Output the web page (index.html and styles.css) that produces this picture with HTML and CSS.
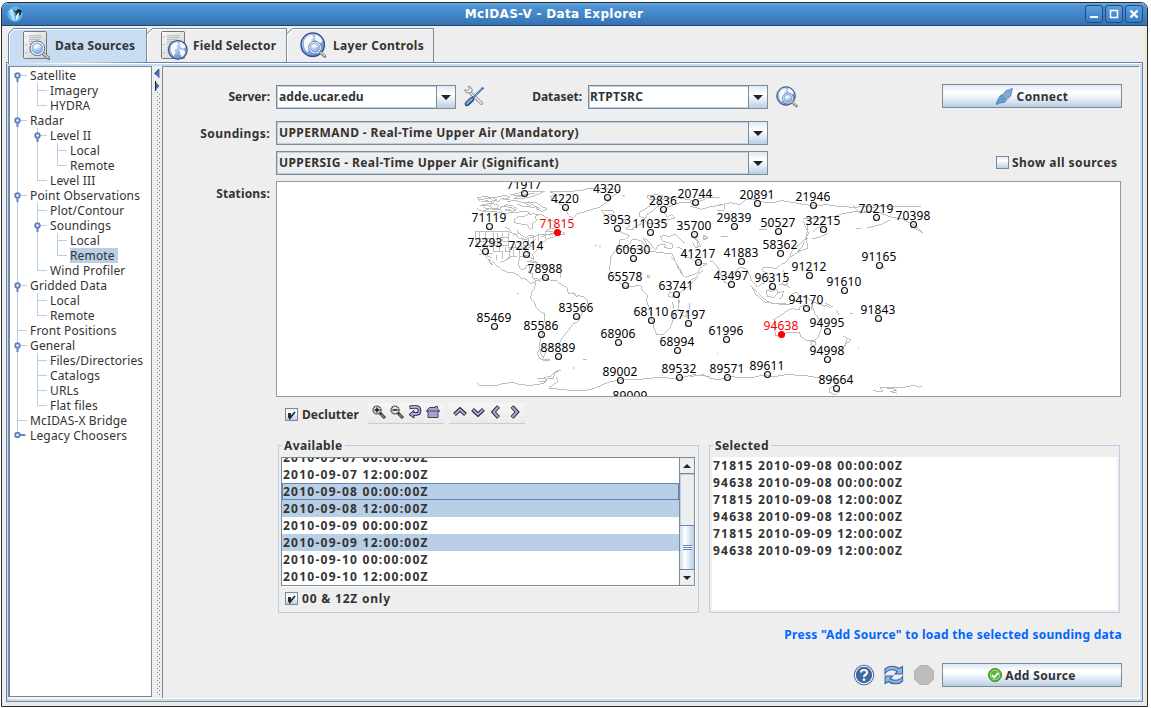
FILE: index.html
```html
<!DOCTYPE html>
<html lang="en">
<head>
<meta charset="utf-8">
<title>McIDAS-V - Data Explorer</title>
<link rel="stylesheet" href="styles.css">
</head>
<body>
<svg class="defs" aria-hidden="true">
  <defs>
    <radialGradient id="globe" cx=".4" cy=".35" r=".7"><stop offset="0" stop-color="#c9dcf3"/><stop offset="1" stop-color="#5f8ccb"/></radialGradient>
    <radialGradient id="lens" cx=".4" cy=".35" r=".7"><stop offset="0" stop-color="#e3effb"/><stop offset="1" stop-color="#6fa3dc"/></radialGradient>
    <linearGradient id="paper" x1="0" y1="0" x2="1" y2="1"><stop offset="0" stop-color="#fafafa"/><stop offset="1" stop-color="#cfcfcf"/></linearGradient>
    <symbol id="page" viewBox="0 0 72 84">
      <rect x="1.5" y="1.5" width="69" height="81" rx="3" fill="url(#paper)" stroke="#777" stroke-width="3"/>
      <path d="M18 14H56M18 20H56M18 26H50M18 32H56M18 38H44M18 50H56M18 56H50M18 62H56" stroke="#aaa" stroke-width="2.5"/>
      <path d="M9 16v3M9 40v3M9 64v3" stroke="#777" stroke-width="3"/>
    </symbol>
    <symbol id="magnifier" viewBox="0 0 66 62">
      <path d="M44 42L60 56" stroke="#777" stroke-width="10" stroke-linecap="round"/>
      <path d="M45 42L59 54" stroke="#ddd" stroke-width="4" stroke-linecap="round"/>
      <circle cx="26" cy="26" r="22" fill="#f4f6fa" stroke="#54699b" stroke-width="3"/>
      <circle cx="26" cy="26" r="16" fill="url(#lens)" stroke="#6c8fc4" stroke-width="2"/>
      <path d="M13 27a13 13 0 0 1 25-5z" fill="#fff" opacity=".6"/>
    </symbol>
    <symbol id="earth" viewBox="0 0 80 80">
      <circle cx="40" cy="40" r="37" fill="url(#globe)" stroke="#37478c" stroke-width="4"/>
      <path d="M13 28Q22 10 38 9L43 18 34 24 38 33 27 40 31 50 24 64Q9 52 13 28zM48 8Q65 13 71 28L63 36 52 31 47 20zM47 38L66 41 69 54 57 69 49 56z" fill="#fff" opacity=".92"/>
    </symbol>
    <symbol id="node-open" viewBox="0 0 7 10"><path d="M3.5 6v4" stroke="#6382bf" stroke-width="2"/><circle cx="3.5" cy="3.5" r="2.2" fill="#fff" stroke="#6382bf" stroke-width="2"/></symbol>
    <symbol id="check" viewBox="0 0 13 13"><path d="M4 5v5M5 5v5l5-6" fill="none" stroke="#222" stroke-width="1.8"/></symbol>
  </defs>
</svg>

<div class="window">
  <header class="titlebar">
    <svg class="app-icon" viewBox="0 0 48 48"><circle cx="24" cy="24" r="23" fill="#62b4e2"/><path d="M6 16l10-8 4 14 5 22-8-2z" fill="#b9e2f5"/><path d="M17 9l9 13 3-10 7-4 9 7-5 12-9 4-6-3 3-10z" fill="#102839"/><path d="M28 27l9-10-3 19-8 9z" fill="#dff5fd"/></svg>
    <h1>McIDAS-V - Data Explorer</h1>
    <div class="win-buttons">
      <span><svg viewBox="0 0 16 16"><path d="M4 11h8" stroke="#fff" stroke-width="2"/></svg></span>
      <span><svg viewBox="0 0 16 16"><path d="M4 4.5h8M4.5 4v8M11.500 4v8M4 11.500h8" stroke="#fff" stroke-width="1.5"/></svg></span>
      <span><svg viewBox="0 0 16 16"><path d="M4.500 4.500l7 7M11.500 4.500l-7 7" stroke="#fff" stroke-width="2.300"/></svg></span>
    </div>
  </header>

  <div class="frame">
    <nav class="tabs">
      <div class="tab tab-active">
        <svg class="tab-shape" width="139" height="36"><path d="M.5 36V5.500L5.500 .5H138.500V34" fill="#c8ddf2" stroke="#6382bf"/><path d="M1.500 36V6L6 1.500H138" fill="none" stroke="#fff"/></svg>
        <svg class="tab-icon" viewBox="0 0 81 87"><use href="#page" width="72" height="84"/><use href="#magnifier" x="17" y="26" width="66" height="62"/></svg>
        <span>Data Sources</span>
      </div>
      <div class="tab tab-field">
        <svg class="tab-shape" width="141" height="34"><path d="M.5 34V6L6.500 .5H140.500V34" fill="#eee" stroke="#7a8a99"/><path d="M1.500 34V7L7 1.500H139" fill="none" stroke="#fff"/></svg>
        <svg class="tab-icon" viewBox="0 0 81 87"><use href="#page" width="72" height="84"/><use href="#earth" x="20" y="26" width="61" height="61"/></svg>
        <span>Field Selector</span>
      </div>
      <div class="tab tab-layer">
        <svg class="tab-shape" width="148" height="34"><path d="M.5 34V6L6.500 .5H147.500V34" fill="#eee" stroke="#7a8a99"/><path d="M1.500 34V7L7 1.500H146" fill="none" stroke="#fff"/></svg>
        <svg class="tab-icon" viewBox="0 0 87 87"><use href="#earth" y="0" width="82" height="82"/><use href="#magnifier" x="24" y="24" width="62" height="62"/></svg>
        <span>Layer Controls</span>
      </div>
    </nav>

    <div class="pane">
      <div class="pane-body">
        <aside class="tree">
          <svg class="tree-lines" width="141" height="390" shape-rendering="crispEdges">
            <path d="M7.500 8V368M8 8.500h9M8 53.500h9M8 128.500h9M8 218.500h9M8 263.500h9M8 278.500h9M8 353.500h9M8 368.500h9
              M27.500 16V38.500M27 23.500h10M27 38.500h10M27.500 61V113.500M27 68.500h10M27 113.500h10M47.500 76V98.500M47 83.500h10M47 98.500h10
              M27.500 136V203.500M27 143.500h10M27 158.500h10M27 203.500h10M47.500 166V188.500M47 173.500h10M47 188.500h10
              M27.500 226V248.500M27 233.500h10M27 248.500h10M27.500 286V338.500M27 293.500h10M27 308.500h10M27 323.500h10M27 338.500h10" fill="none" stroke="#b8cfe5"/>
            <g shape-rendering="auto">
              <use href="#node-open" x="4" y="5" width="7" height="10"/><use href="#node-open" x="4" y="50" width="7" height="10"/>
              <use href="#node-open" x="24" y="65" width="7" height="10"/><use href="#node-open" x="4" y="125" width="7" height="10"/>
              <use href="#node-open" x="24" y="155" width="7" height="10"/><use href="#node-open" x="4" y="215" width="7" height="10"/>
              <use href="#node-open" x="4" y="275" width="7" height="10"/>
              <path d="M10 368h5" stroke="#6382bf" stroke-width="2"/><circle cx="7.500" cy="368" r="2.200" fill="#fff" stroke="#6382bf" stroke-width="2"/>
            </g>
          </svg>
          <ul>
            <li>Satellite</li><li class="l1">Imagery</li><li class="l1">HYDRA</li>
            <li>Radar</li><li class="l1">Level II</li><li class="l2">Local</li><li class="l2">Remote</li><li class="l1">Level III</li>
            <li>Point Observations</li><li class="l1">Plot/Contour</li><li class="l1">Soundings</li><li class="l2">Local</li><li class="l2"><mark>Remote</mark></li><li class="l1">Wind Profiler</li>
            <li>Gridded Data</li><li class="l1">Local</li><li class="l1">Remote</li>
            <li>Front Positions</li>
            <li>General</li><li class="l1">Files/Directories</li><li class="l1">Catalogs</li><li class="l1">URLs</li><li class="l1">Flat files</li>
            <li>McIDAS-X Bridge</li><li>Legacy Choosers</li>
          </ul>
        </aside>
        <div class="splitter"><svg width="10" height="26"><path d="M7.500 3v9.500l-5-4.700zM3 15v10l4.500-5z" fill="#4a6db5"/><path d="M7 3l-4.500 5M3.500 15v10" stroke="#222"/></svg></div>

        <main class="main">
          <div class="row row-server">
            <label class="label tight">Server:</label>
            <div class="combo editable w180"><span class="host">adde.ucar.edu</span><i></i></div>
            <svg class="tools" viewBox="0 0 66 70">
              <path d="M18 20L56 56" stroke="#777" stroke-width="9" stroke-linecap="round"/><path d="M18 20L56 56" stroke="#f7f7f7" stroke-width="4.500" stroke-linecap="round"/>
              <path d="M5 14Q5 26 19 24L28 19Q27 4 15 4L20 11 13 17z" fill="#eee" stroke="#777" stroke-width="2.500"/>
              <path d="M60 9L29 40" stroke="#34608f" stroke-width="6"/><path d="M60 9L29 40" stroke="#c3dcf4" stroke-width="2"/>
              <path d="M57 8l5 5" stroke="#4a82bd" stroke-width="7"/>
              <path d="M26 44L12 57" stroke="#1f4379" stroke-width="15" stroke-linecap="round"/><path d="M26 43L12 56" stroke="#80a9d6" stroke-width="8" stroke-linecap="round"/>
            </svg>
            <label class="label tight dataset">Dataset:</label>
            <div class="combo editable w180"><span class="set">RTPTSRC</span><i></i></div>
            <svg class="browse" viewBox="0 0 66 66"><use href="#earth" width="60" height="60"/><use href="#magnifier" x="16" y="16" width="50" height="50"/></svg>
            <button class="button connect"><svg width="17" height="17" viewBox="0 0 50 50"><path d="M1 49L3 39 13 22 23 18 33 31 26 42 11 44z" fill="#6a99d3" stroke="#3f6fb0" stroke-width="2"/><path d="M22 17L30 7 40 5 48 1 46 12 43 24 34 31z" fill="#7fa9dc" stroke="#3f6fb0" stroke-width="2"/><path d="M20 16L35 34" stroke="#9ac779" stroke-width="3.500"/></svg>Connect</button>
          </div>
          <div class="row row-s1">
            <label class="label">Soundings:</label>
            <div class="combo w492"><span>UPPERMAND - Real-Time Upper Air (Mandatory)</span><i></i></div>
          </div>
          <div class="row row-s2">
            <div class="combo w492"><span>UPPERSIG - Real-Time Upper Air (Significant)</span><i></i></div>
            <label class="checkbox show-all"><b></b>Show all sources</label>
          </div>
          <div class="row row-map">
            <label class="label stations-label">Stations:</label>
            <svg class="map" viewBox="277 182 843 214">
              <g class="coast" transform="translate(460 178) scale(.33333)">
                <path d="M52 60L70 56 95 58 110 66 84 72 62 70zM66 80L95 76 118 82 108 92 78 92zM98 60L136 52 150 58 128 66M70 98L92 92 118 96 124 84 150 88 168 96 158 100 134 94M150 50L184 44 200 40 254 40 232 50 212 58 180 62 158 60M140 70L168 68 192 74 212 84 190 86 172 78M204 74L228 74 246 86 262 92 246 100 228 92M52 92L60 98 80 102 100 100 130 106 160 104 178 102 196 100 210 104 196 114 176 116 162 124 164 134 184 138 202 140 210 154 218 152 216 138 230 128 224 116 236 108 250 112 262 122 280 130 292 140 284 150 264 154 254 162 276 160 284 166 302 160 316 168 294 172 280 178 262 182 250 192 238 198 236 212 222 224 218 230 222 246 214 240 206 232 180 236 176 250 176 262 184 276 196 272 200 262 210 264 208 276 204 284 216 286 218 298 228 308 238 306 244 312"/>
                <path d="M56 64L90 62 104 70M60 84L84 82 96 88M74 66L100 74 86 88M112 72L124 62 150 66M122 90L140 80 158 84 172 92M160 54L196 50 226 46M166 58L190 54 206 46M182 74L206 72 222 84 240 92M210 90L230 86 238 98M96 96L110 90 126 98M136 98L150 94M206 112L220 106 234 112M136 148L146 152 154 162M160 172L176 166 192 176 186 186M170 156L180 168M196 180L206 172 222 172M244 176L262 170 280 166 298 168M268 172L290 164M140 244L150 236 170 236M56 228L66 230M80 232L96 240"/>
                <path d="M46 160L46 180 54 204 66 222 76 232 92 254 98 262 88 252 84 244 94 248 108 262 120 270 126 276 142 282 160 284 174 290 184 300 198 304 210 316 222 314 228 310"/>
                <path d="M46 162H146L166 168 178 180 194 186 206 180 222 176 236 170 246 168 256 172M60 163V182H100V164M78 163V204M100 182V222M64 204H120M112 164V206M120 222V204H146V190M128 164V190H160M146 164V202M160 188L170 210H144M150 210V240M170 210L200 212 220 202M162 212V236M178 214V236M192 212L206 226M100 222H128V242M82 204V226H100M174 190L188 210 214 196 228 184M206 184V204M222 176V196M60 192H100M100 192H122M120 180H146M136 206V222H152M190 190V202H214M236 172V188M256 164V182M110 232V246M120 254L142 244 150 240"/>
                <path d="M210 246L234 254 220 250M238 260L260 262 252 268 240 264M212 236L222 244M225 250L236 262M200 250L228 254M302 286V300"/>
                <path d="M218 300L238 304 254 298 270 306 290 308 302 318 320 328 326 348 342 344 350 352 370 356 382 366 382 378 370 392 364 412 354 430 338 438 328 454 316 468 304 484 298 494 290 498 286 504 270 506 258 516 256 526 246 544 270 546M228 310L224 328 214 346 212 360 222 372 230 390 244 402 254 408 254 426 248 444 248 462 244 478 240 492 238 512 232 528 238 540 254 548 270 548M244 500L242 526 250 540M340 346L354 358"/>
                <path d="M270 42L300 40 330 40 362 38 380 32 440 32 480 38 474 46 460 52 450 66 430 80 418 88 396 94 372 102 350 108 338 122 326 112 318 98 306 84 290 72 276 66 270 56 290 50zM424 98L444 96 462 100 460 108 440 112 426 104M482 120L494 126 502 136 510 144 496 152 508 156 522 154M482 136L496 134M486 52H494"/>
                <path d="M478 160L494 168 508 172 496 184 480 186 476 202 494 206 506 200 516 186 530 184 546 190 558 206 564 210 560 196 548 182 552 180 570 194 578 208 588 214 594 202 606 198 618 200 612 208 630 212 640 208 636 198 622 194 608 188 600 176 612 172 630 176 644 168 650 174 664 188 676 196M510 156L524 148 540 140 546 128 552 122 560 136 590 136 604 128 620 126 646 120 634 110 622 118 612 104 622 88 646 78 668 72 692 74 706 84M540 116L556 122 562 108 580 98 596 84 600 72 612 62 650 58 690 66 704 74M560 54L590 50 610 54 596 64 570 66zM540 116L538 104 554 94 570 84 582 66"/>
                <path d="M478 206L464 220 452 238 450 262 448 276 460 292 470 306 484 320 502 328 526 324 542 322 548 340 562 350 560 370 568 390 574 416 580 444 590 470 610 470 630 450 638 430 642 412 654 394 658 370 654 350 666 340 690 322 710 300 714 296M478 206L506 210 550 214 560 220 588 222 618 226 636 228 646 250 658 278 674 298 694 292 714 284 718 272 740 258 722 254 706 252 694 242 680 238 668 214 650 206M634 238L650 256 672 296M656 364V390L666 412 678 416 688 394 690 376M628 342L640 344 638 358 626 356zM562 292h8v6h-8zM636 372L642 392 638 378"/>
                <path d="M700 178L714 188 722 206 706 208 698 192M732 170l8 8-8 8zM50 616L58 622 84 622 106 624 130 616 160 614 182 620 206 622 230 620 256 614 262 602 280 602 284 586 304 576 286 580 272 594 244 602M232 602H254L258 610 236 610M290 596L292 612 266 630 300 634 340 638 370 638 400 632 428 620 450 612 480 606 540 604 600 598 650 602 700 590 750 596M170 346h8M404 203h6M416 206h6M342 568v6M368 544h12"/>
              </g>
              <g class="coast" transform="translate(690 178) scale(.33333)">
                <path d="M0 84L34 94 60 86 90 82 120 74 150 80 166 66 196 64 224 74 250 74 276 68 324 76 370 84 410 80 450 86 500 88 518 84 550 88 570 84 694 86M82 98L104 96 102 78 82 82M0 70L36 60 90 60M20 72L44 64M490 82L510 106 530 100 570 104 604 118 636 122 654 132 676 144 698 164 680 154 662 146M340 122L372 122 430 116 464 106 500 100 530 104M340 128L346 146 356 166 340 190 320 206 304 220 300 236 286 254 272 260 260 272 240 268 218 270 216 278 232 286 236 300 222 316 210 320"/>
                <path d="M354 136L350 176 352 212 334 218 322 220 338 204 344 188 354 180M396 138L378 154 368 162M320 222L332 218 304 236M232 156L208 156M94 176H114M40 178l6-4 8 6-8 4zM498 152h14M530 150L572 140 600 126M414 166L388 178 366 182M10 178L24 190 22 206M60 252H70L82 266 92 288 104 314 118 316 122 300 136 280 148 268 168 272 180 292 184 306 194 316 202 328 210 320M-2 310L20 296 40 276M180 322L202 344 220 362 240 374 280 380 300 380M186 326L198 350 224 372 250 376 288 378M228 336L244 340 260 334 264 344 252 358 232 356zM262 346L280 340 276 358 268 362M280 276L286 296 276 318 292 320 288 304M236 302L246 314 240 324M298 370L320 366M302 350L316 342 330 354 350 358 370 372 390 380 410 384 424 390M300 328L280 320 268 320"/>
                <path d="M252 424L270 414 286 402 306 392 328 396 330 386 344 380 356 392 364 396 366 378 374 406 388 424 394 452 386 474 372 488 348 486 332 476 328 462 292 464 274 470 256 474 254 450zM360 490H376V502H366zM460 474L484 486 470 496 458 512 442 526 464 506 470 484M440 396L446 410M480 408L490 408M504 508h3M80 528h3M578 262l6 10M406 376L428 386"/>
                <path d="M0 596L40 590 58 600 84 606 118 596 180 600 226 590 250 596 290 590 340 592 390 600 440 606 450 614 420 630 418 642 434 650 450 640M550 638L580 642 570 628 610 632 620 638 600 640 620 646M590 630H630L670 622 690 628 696 624"/>
              </g>
              <g id="stations" class="stations"></g>
            </svg>
          </div>
          <div class="row row-declutter">
            <label class="checkbox"><b><svg width="11" height="11" viewBox="1 1 11 11"><use href="#check" width="13" height="13"/></svg></b>Declutter</label>
            <div class="toolbar">
              <svg viewBox="0 0 14 14"><circle cx="5" cy="5" r="4" fill="#dde" stroke="#222" stroke-width="1.200" stroke-dasharray="1.500 .6"/><path d="M2.500 5h5M5 2.500v5" stroke="#111" stroke-width="1.400"/><path d="M8 8l5 5" stroke="#222" stroke-width="3"/><path d="M9 9l3.500 3.500" stroke="#c37b45" stroke-width="1.500"/></svg>
              <svg viewBox="0 0 14 14"><circle cx="5" cy="5" r="4" fill="#dde" stroke="#222" stroke-width="1.200" stroke-dasharray="1.500 .6"/><path d="M2.500 5h5" stroke="#111" stroke-width="1.400"/><path d="M8 8l5 5" stroke="#222" stroke-width="3"/><path d="M9 9l3.500 3.500" stroke="#c37b45" stroke-width="1.500"/></svg>
              <svg viewBox="0 0 14 14"><path d="M1.500 2.500L4 2H8Q11.500 2 11.500 5.500T8 9H5.500" fill="none" stroke="#223" stroke-width="3.600"/><path d="M6 5.500v7.500L1 9.500z" fill="#aaaadd" stroke="#223"/><path d="M2 2.500L4 2H8Q11.500 2 11.500 5.500T8 9H4" fill="none" stroke="#aaaadd" stroke-width="1.800"/></svg>
              <svg viewBox="0 0 14 14"><path d="M.5 5.500L3.500 2.500H9V1.500H11.500V3.500L13.500 5.500V6.500H12V12.500H2V6.500H.5z" fill="#a3a3d0" stroke="#446"/><path d="M1 6h12" stroke="#446"/></svg>
            </div>
            <div class="toolbar arrows">
              <svg viewBox="0 0 14 14"><path class="edge" d="M1.500 9.500L7 4.500l5.500 5"/><path class="fill" d="M2 9.200L7 4.500l5 4.700"/></svg>
              <svg viewBox="0 0 14 14"><path class="edge" d="M1.500 4.500L7 9.500l5.500-5"/><path class="fill" d="M2 4.800L7 9.500l5-4.700"/></svg>
              <svg viewBox="0 0 14 14"><path class="edge" d="M9.500 1.500L4.500 7l5 5.500"/><path class="fill" d="M9.200 2L4.500 7l4.700 5"/></svg>
              <svg viewBox="0 0 14 14"><path class="edge" d="M5 1.500L10 7l-5 5.500"/><path class="fill" d="M5.300 2L10 7l-4.700 5"/></svg>
            </div>
          </div>
          <div class="groups">
            <section class="group available">
              <h2>Available</h2>
              <div class="scroll">
                <ul class="times">
                  <li>2010-09-07 00:00:00Z</li><li>2010-09-07 12:00:00Z</li><li class="sel focus">2010-09-08 00:00:00Z</li><li class="sel">2010-09-08 12:00:00Z</li>
                  <li>2010-09-09 00:00:00Z</li><li class="sel">2010-09-09 12:00:00Z</li><li>2010-09-10 00:00:00Z</li><li>2010-09-10 12:00:00Z</li>
                </ul>
                <div class="bar"><div class="step up"></div><div class="track"></div><div class="thumb"></div><div class="step down"></div></div>
              </div>
              <label class="checkbox only"><b><svg width="11" height="11" viewBox="1 1 11 11"><use href="#check" width="13" height="13"/></svg></b>00 &amp; 12Z only</label>
            </section>
            <section class="group selected">
              <h2>Selected</h2>
              <ul class="times chosen">
                <li>71815 2010-09-08 00:00:00Z</li><li>94638 2010-09-08 00:00:00Z</li><li>71815 2010-09-08 12:00:00Z</li>
                <li>94638 2010-09-08 12:00:00Z</li><li>71815 2010-09-09 12:00:00Z</li><li>94638 2010-09-09 12:00:00Z</li>
              </ul>
            </section>
          </div>
          <p class="status">Press "Add Source" to load the selected sounding data</p>
          <div class="actions">
            <svg width="22" height="22" viewBox="0 0 22 22"><circle cx="11" cy="11" r="9.700" fill="#fff" stroke="#4d76ad" stroke-width="1.100"/><circle cx="11" cy="11" r="8.200" fill="#41699f"/><path d="M8 8.500Q8 6 11 6t3 2.500q0 1.500-1.500 2.300T11 13" fill="none" stroke="#fff" stroke-width="2.200"/><circle cx="11" cy="15.700" r="1.400" fill="#fff"/></svg>
            <svg width="20" height="20" viewBox="0 0 20 20"><g id="ra"><path d="M1 8.500V4Q4 1 8 1.200q5 .3 7 2.300L18.500 1.500V9H11l2.500-2.500Q11 4.500 8 4.700 3.500 5 1 8.500z" fill="#8fb5df" stroke="#3467a4" stroke-width="1.100"/></g><use href="#ra" transform="rotate(180 9.800 10)"/></svg>
            <svg width="20" height="20" viewBox="0 0 20 20"><path d="M6 .5h8L19.500 6v8L14 19.500H6L.5 14V6z" fill="#bdbdbd" stroke="#b2b2b2"/></svg>
            <button class="button add"><svg width="14" height="14" viewBox="0 0 14 14"><circle cx="7" cy="7" r="6.500" fill="#55b52f" stroke="#3b8d22"/><circle cx="7" cy="7" r="4.700" fill="none" stroke="#bfe8ab" stroke-width=".8"/><path d="M4 7l2.300 2.300L10.200 5" fill="none" stroke="#fff" stroke-width="1.900"/></svg>Add Source</button>
          </div>
        </main>
      </div>
    </div>
  </div>
</div>
<script src="stations.js"></script>
</body>
</html>
```
FILE: styles.css
```css
* { box-sizing: border-box; }
body { margin: 0; background: #fff; color: #333; font: bold 12px/15px "Noto Sans", sans-serif; overflow: hidden; }
ul, h1, h2, p { margin: 0; padding: 0; list-style: none; font-size: inherit; }
svg { display: block; flex: none; }
.defs { position: absolute; width: 0; height: 0; }

.window { display: flex; flex-direction: column; width: 1147px; height: 705px; margin: 2px 0 0 1px; border: 1px solid #2b2b2b; border-radius: 7px 7px 0 0; overflow: hidden; background: #eee; }
.titlebar { display: flex; align-items: center; height: 23px; flex: none; border-bottom: 1px solid #1c4878; background: linear-gradient(#6caae0 0, #4c92d3 15%, #4086c8 55%, #3871ad); color: #fff; padding: 0 4px 0 5px; }
.app-icon { width: 16px; height: 16px; }
.titlebar h1 { flex: 1; text-align: center; font: bold 12px/16px "DejaVu Sans", sans-serif; letter-spacing: .3px; }
.win-buttons { display: flex; gap: 2px; }
.win-buttons span { width: 18px; height: 18px; border: 1px solid #1f4d80; border-radius: 3px; background: linear-gradient(#5b9edd, #3b7ec0); }

.frame { flex: 1; display: flex; flex-direction: column; padding: 2px 4px 4px; background: linear-gradient(#edeae0, #edeae0) right / 4px 100% no-repeat, linear-gradient(#edeae0, #edeae0) bottom / 100% 4px no-repeat; }
.tabs { display: flex; height: 34px; padding-left: 2px; position: relative; z-index: 1; }
.tab { position: relative; display: flex; align-items: center; height: 34px; }
.tab-shape { position: absolute; left: 0; top: 0; }
.tab-icon { position: relative; width: 27px; height: 29px; }
.tab span { position: relative; letter-spacing: .2px; }
.tab-active { width: 139px; padding-left: 15px; gap: 5px; }
.tab-field { width: 140px; margin-left: -1px; padding-left: 15px; gap: 5px; }
.tab-layer { width: 148px; padding-left: 14px; gap: 6px; }
.tab-layer span { letter-spacing: .3px; }

.pane { flex: 1; display: flex; border: 1px solid #6382bf; border-bottom-color: #7a8a99; padding: 3px 3px 3px 1px; background: linear-gradient(#fff 1px, #c8ddf2 1px); }
.pane-body { flex: 1; display: flex; background: #eee; box-shadow: 1px 1px 0 #fff; }

.tree { position: relative; width: 144px; border: 1px solid #7a8a99; border-left-width: 2px; background: #fff; margin-bottom: 1px; font-weight: normal; }
.tree-lines { position: absolute; left: 0; top: 0; }
.tree ul { position: relative; padding-top: 1px; letter-spacing: .15px; }
.tree li { height: 15px; padding-left: 20px; white-space: nowrap; }
.tree .l1 { padding-left: 40px; }
.tree .l2 { padding-left: 60px; }
.tree mark { display: inline-block; height: 15px; padding-right: 3px; background: #b8cfe5; color: inherit; }
.splitter { width: 10px; background: conic-gradient(#8a929c 0 0) 0 0 / 0 0, linear-gradient(#9aa2ab, #9aa2ab) 0 0 / 0 0, #eee; display: flex; flex-direction: column; }
.splitter::after { content: ""; flex: 1; width: 4px; margin: 0 0 3px 5px; background: radial-gradient(circle at .5px .5px, #7f8790 .6px, transparent .7px) 0 0 / 4px 4px, radial-gradient(circle at 2.5px 2.5px, #7f8790 .6px, transparent .7px) 0 0 / 4px 4px; }

.main { flex: 1; border: 1px solid #7a8a99; border-width: 1px 0 0 1px; padding-top: 17px; letter-spacing: .4px; }
.row { display: flex; }
.label { width: 107px; margin-right: 6px; text-align: right; white-space: nowrap; }
.tight { letter-spacing: -.05px; }
.stations-label { letter-spacing: .15px; }
.row-server { height: 25px; padding-top: 1px; }
.row-server .label { padding-top: 4px; }
.combo { display: flex; height: 24px; border: 1px solid #7a8a99; flex: none; box-shadow: inset 1px 1px 0 #b8cfe5, inset 0 -1px 0 #b8cfe5; }
.combo span { flex: 1; padding: 3px 0 0 2px; white-space: nowrap; }
.combo i { width: 19px; border-left: 1px solid #7a8a99; background: linear-gradient(#dfe9f3, #fff 35%, #fff 40%, #b8cfe5); display: flex; align-items: center; justify-content: center; }
.combo i::after { content: ""; border: 5px solid transparent; border-top-color: #222; border-bottom: 0; }
.editable { background: #fff; }
.w180 { width: 180px; }
.w492 { width: 492px; }
.combo .host { letter-spacing: .1px; }
.combo .set { letter-spacing: .25px; padding-left: 1px; }
.tools { width: 22px; height: 23px; margin: 0 0 0 7px; }
.row-server .dataset { width: 97px; }
.browse { width: 22px; height: 22px; margin: 1px 0 0 8px; }
.button { display: flex; align-items: center; justify-content: center; gap: 4px; width: 180px; height: 24px; padding: 0; border: 1px solid #7a8a99; background: linear-gradient(#dde8f3, #fff 32%, #fff 40%, #b8cfe5); color: #333; font: inherit; letter-spacing: .35px; }
.connect { margin: -1px 0 0 144px; }
.row-s1 { margin-top: 12px; }
.row-s1 .label { padding-top: 5px; }
.row-s2 { margin-top: 6px; padding-left: 113px; }
.checkbox { display: flex; align-items: center; gap: 4px; height: 15px; white-space: nowrap; }
.checkbox b { width: 13px; height: 13px; border: 1px solid #7a8a99; background: linear-gradient(#e6eef6, #fff 35%, #b8cfe5); }
.show-all { margin: 4px 0 0 228px; gap: 3px; letter-spacing: .45px; }
.row-map { margin-top: 6px; }
.row-map .label { padding-top: 5px; }
.map { width: 845px; height: 216px; border: 1px solid #999; background: #fff; }
.coast { fill: none; stroke: #bdbdbd; stroke-width: 3; shape-rendering: crispEdges; }
.stations { font-weight: normal; letter-spacing: .1px; text-anchor: middle; fill: #000; }
.stations circle { fill: #ccc; fill-opacity: .25; stroke: #111; stroke-width: 1.1; }
.stations .on { fill: #f00; }
.stations circle.on { stroke: #f00; fill-opacity: 1; }

.row-declutter { height: 48px; padding: 6px 0 0 122px; }
.row-declutter .checkbox { width: 83px; height: 22px; letter-spacing: .05px; }
.toolbar { display: flex; gap: 4px; width: 76px; height: 21px; padding: 2px 4px; border-bottom: 1px solid #ccc; background: linear-gradient(#f6f6f6, #eaeaea); }
.toolbar svg { width: 14px; height: 14px; }
.arrows { margin-left: 5px; }
.edge { fill: none; stroke: #222; stroke-width: 4; }
.fill { fill: none; stroke: #aad; stroke-width: 2; }

.groups { display: flex; gap: 10px; padding-left: 115px; }
.group { position: relative; height: 168px; border: 1px solid #b8cfe5; }
.group h2 { position: absolute; left: 3px; top: -8px; padding: 0 2px; background: #eee; }
.available { width: 421px; padding: 11px 3px 0 2px; }
.selected { width: 411px; padding: 11px 2px 2px; }
.scroll { display: flex; width: 414px; height: 129px; border: 1px solid #7a8a99; background: #fff; overflow: hidden; box-shadow: 1px 1px 0 #fff; }
.times { flex: 1; letter-spacing: 1.26px; }
.times li { height: 17px; padding: 1px 0 0 1px; white-space: nowrap; }
.scroll .times { margin-top: -9px; }
.times .sel { background: #b8cfe5; }
.times .focus { box-shadow: inset 0 0 0 1px #6382bf; }
.chosen { height: 153px; background: #fff; letter-spacing: 1.24px; }
.bar { display: flex; flex-direction: column; width: 15px; border-left: 1px solid #7a8a99; background: #eee; }
.step { height: 15px; display: flex; align-items: center; justify-content: center; flex: none; }
.step::after { content: ""; border: 4px solid transparent; }
.up { height: 16px; border-bottom: 1px solid #7a8a99; }
.up::after { border-top: 0; border-bottom-color: #222; }
.down::after { border-bottom: 0; border-top-color: #222; }
.track { flex: 1; box-shadow: inset 1px 1px 0 #b8cfe5; }
.thumb { height: 45px; border: 1px solid #6382bf; border-width: 1px 0; background: linear-gradient(#6382bf 1px, #fff 1px, #fff 2px, #6382bf 2px, #6382bf 3px, #fff 3px, #fff 4px, #6382bf 4px, #6382bf 5px, transparent 5px) 3px 19px / 9px 6px no-repeat, linear-gradient(90deg, #c8dbed, #fff 35%, #b8cfe5); }
.only { margin-top: 5px; margin-left: 4px; letter-spacing: .8px; }

.status { width: 959px; margin-top: 14px; text-align: right; color: #0066ff; letter-spacing: .28px; }
.actions { display: flex; align-items: center; justify-content: flex-end; width: 959px; margin-top: 21px; gap: 10px; }
.actions svg:first-child { margin-right: -1px; }
.actions .add { margin-left: -2px; }
```
FILE: stations.js
```js
// [station id, x, y, selected]
const stations = [
  [71917, 524, 193], [4220, 565, 207], [4320, 607, 197], [2836, 663, 209], [20744, 695, 202], [20891, 757, 203], [21946, 813, 205],
  [70219, 876, 217], [70398, 913, 224], [71119, 489, 226], [71815, 557, 232, 1], [3953, 617, 228], [11035, 650, 232], [35700, 694, 234],
  [29839, 734, 226], [50527, 778, 231], [32215, 823, 229], [72293, 485, 251], [72214, 526, 254], [60630, 633, 258], [41217, 698, 262],
  [41883, 741, 261], [58362, 780, 253], [91165, 879, 265], [78988, 545, 277], [65578, 625, 285], [63741, 676, 294], [43497, 731, 284],
  [96315, 772, 286], [91212, 809, 275], [91610, 844, 290], [94170, 806, 308], [91843, 878, 318], [85469, 494, 326], [85586, 541, 334],
  [83566, 576, 316], [68906, 618, 342], [68110, 651, 320], [67197, 688, 323], [61996, 726, 339], [94638, 781, 334, 1], [94995, 827, 331],
  [88889, 558, 356], [68994, 677, 350], [94998, 827, 359], [89002, 620, 380], [89532, 679, 377], [89571, 727, 377], [89611, 767, 374],
  [89664, 836, 388], [89009, 630, 404]
];
const NS = "http://www.w3.org/2000/svg";
const layer = document.getElementById("stations");
for (const [id, x, y, on] of stations) {
  const dot = document.createElementNS(NS, "circle");
  dot.setAttribute("cx", x + 0.5);
  dot.setAttribute("cy", y + 0.5);
  dot.setAttribute("r", 3);
  const text = document.createElementNS(NS, "text");
  text.setAttribute("x", x);
  text.setAttribute("y", y - 4);
  text.textContent = id;
  if (on) { dot.setAttribute("class", "on"); text.setAttribute("class", "on"); }
  layer.append(dot, text);
}
```
